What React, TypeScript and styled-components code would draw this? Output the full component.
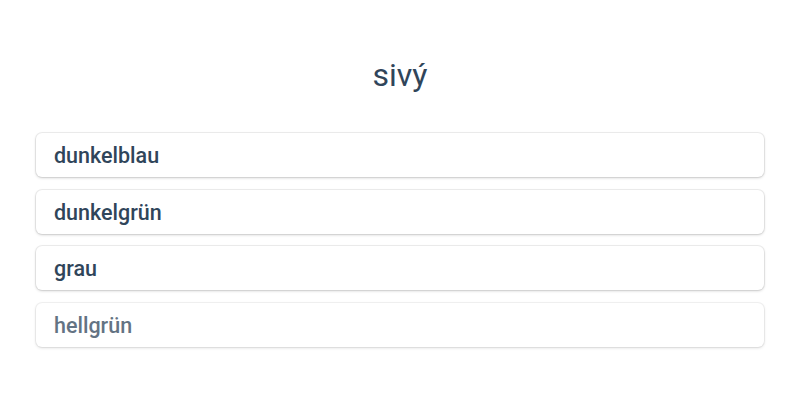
import styled, { createGlobalStyle } from "styled-components";

const GlobalStyle = createGlobalStyle`
  html, body {
    margin: 0;
    padding: 0;
    background: #ffffff;
  }
  body {
    font-family: Roboto, "Noto Sans", Arial, sans-serif;
    color: #2c3e50;
  }
`;

const options = [
  { label: "dunkelblau", faded: false },
  { label: "dunkelgrün", faded: false },
  { label: "grau", faded: false },
  { label: "hellgrün", faded: true },
];

export default function App() {
  return (
    <>
      <GlobalStyle />
      <Page>
        <Question>sivý</Question>
        <Answers>
          {options.map((option) => (
            <Answer key={option.label} faded={option.faded}>
              {option.label}
            </Answer>
          ))}
        </Answers>
      </Page>
    </>
  );
}

const Page = styled.main`
  width: 800px;
  height: 400px;
  box-sizing: border-box;
  padding: 56px 36px 0;
  display: flex;
  flex-direction: column;
  align-items: stretch;
`;

const Question = styled.h1`
  margin: 0 0 39px;
  font-size: 32px;
  line-height: 38px;
  font-weight: 400;
  text-align: center;
  color: #30455a;
`;

const Answers = styled.div`
  display: flex;
  flex-direction: column;
  gap: 12.67px;
`;

const Answer = styled.button<{ faded: boolean }>`
  height: 44px;
  box-sizing: border-box;
  display: flex;
  align-items: center;
  padding: 1px 18px 0;
  border: none;
  border-radius: 6px;
  background: #ffffff;
  box-shadow: 0 0 0 1px rgba(0, 0, 0, 0.06), 0 1px 3px rgba(0, 0, 0, 0.18);
  font-family: Roboto, "Noto Sans", Arial, sans-serif;
  font-size: 21.5px;
  font-weight: 500;
  color: #30455a;
  text-align: left;
  opacity: ${(props) => (props.faded ? 0.75 : 1)};
  cursor: pointer;
`;
